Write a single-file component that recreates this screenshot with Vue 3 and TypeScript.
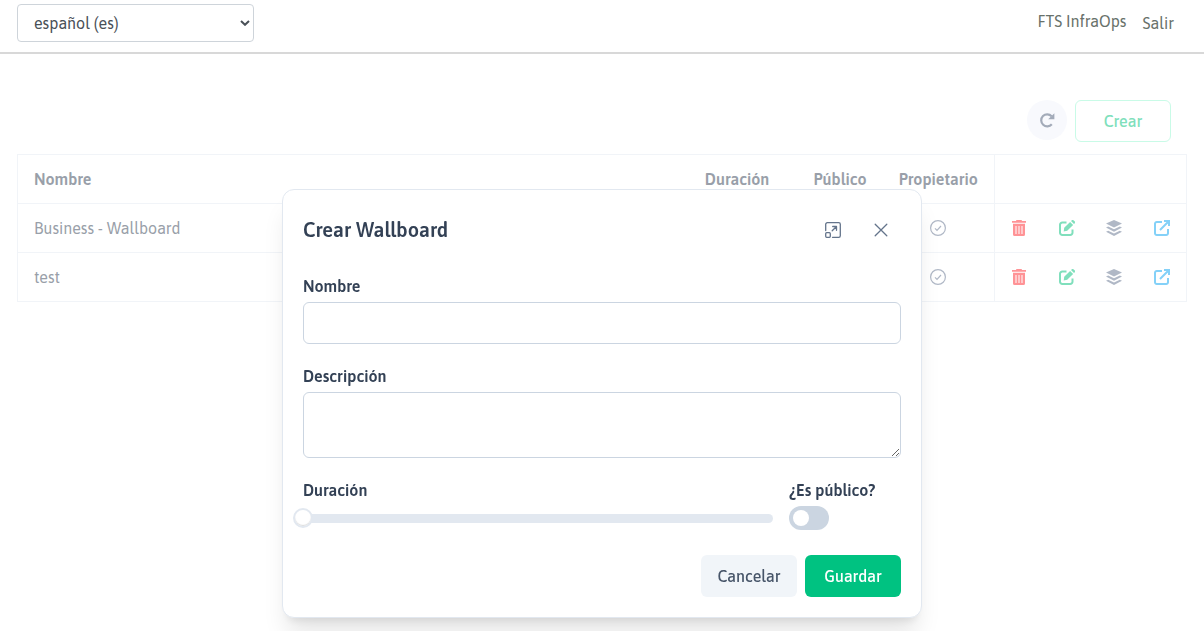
<script setup lang="ts">
import { ref } from 'vue'

interface Wallboard {
  id: number
  name: string
}

const language = ref('es')
const boards = ref<Wallboard[]>([
  { id: 1, name: 'Business - Wallboard' },
  { id: 2, name: 'test' },
])
const name = ref('')
const description = ref('')
const duration = ref(0)
const isPublic = ref(false)
</script>

<template>
  <div class="page">
    <header class="topbar">
      <div class="language">
        <select v-model="language" aria-label="Idioma">
          <option value="es">español (es)</option>
        </select>
        <svg class="chevron" viewBox="0 0 10 6" aria-hidden="true">
          <path d="M1 1 5 4.800 9 1" />
        </svg>
      </div>
      <nav class="account">
        <span class="user">FTS InfraOps</span>
        <a href="#">Salir</a>
      </nav>
    </header>

    <main class="content">
      <div class="toolbar">
        <button class="refresh" type="button" aria-label="Actualizar">
          <svg viewBox="0 0 16 16" aria-hidden="true">
            <path d="M12.800 12.200A6 6 0 1 1 12.600 4.200" fill="none" stroke="currentColor" stroke-width="2.200" />
            <path d="M15.400 1.200v6H9.200Z" fill="currentColor" />
          </svg>
        </button>
        <button class="create" type="button">Crear</button>
      </div>

      <table class="boards">
        <colgroup>
          <col />
          <col class="col-duration" />
          <col class="col-public" />
          <col class="col-owner" />
          <col class="col-actions" />
        </colgroup>
        <thead>
          <tr>
            <th class="name">Nombre</th>
            <th>Duración</th>
            <th>Público</th>
            <th>Propietario</th>
            <th class="actions"></th>
          </tr>
        </thead>
        <tbody>
          <tr v-for="board in boards" :key="board.id">
            <td class="name">{{ board.name }}</td>
            <td></td>
            <td></td>
            <td>
              <svg class="icon check" viewBox="0 0 16 16" aria-hidden="true">
                <circle cx="8" cy="8" r="7.400" />
                <path d="m5 8.300 2 2 4-4.300" />
              </svg>
            </td>
            <td class="actions">
              <div class="action-row">
                <button class="delete" type="button" aria-label="Eliminar">
                  <svg class="icon" viewBox="0 0 16 16" aria-hidden="true">
                    <path fill="currentColor" fill-rule="evenodd" d="M5.500 0h5l.6 1H15v1.800H1V1h3.900ZM2 3.800h12v10.700a1.500 1.500 0 0 1-1.500 1.500h-9A1.500 1.500 0 0 1 2 14.500ZM4.500 6v8h1V6Zm3 0v8h1V6Zm3 0v8h1V6Z" />
                  </svg>
                </button>
                <button class="edit" type="button" aria-label="Editar">
                  <svg class="icon" viewBox="0 0 16 16" aria-hidden="true">
                    <path d="M7.500 2.500H3.300A2.300 2.300 0 0 0 1 4.800v7.900A2.300 2.300 0 0 0 3.300 15h7.900a2.300 2.300 0 0 0 2.300-2.300V9.500" fill="none" stroke="currentColor" stroke-width="2" />
                    <path d="m5.200 7.800 5.900-5.900 3 3L8.200 10.800 4.700 11.500ZM12 1l.6-.6a1.500 1.500 0 0 1 2.100 0l.9.9a1.500 1.500 0 0 1 0 2.100l-.6.6Z" fill="currentColor" />
                  </svg>
                </button>
                <button class="layers" type="button" aria-label="Widgets">
                  <svg class="icon" viewBox="0 0 16 16" aria-hidden="true">
                    <path fill="currentColor" d="M8 0 16 3.600 8 7.400 0 3.600ZM0 7.600l2.200-1 5.800 2.700 5.800-2.700 2.200 1-8 4.100ZM0 11.800l2.200-1 5.800 2.800 5.800-2.800 2.200 1L8 16Z" />
                  </svg>
                </button>
                <button class="open" type="button" aria-label="Abrir">
                  <svg class="icon" viewBox="0 0 16 16" aria-hidden="true">
                    <path d="M8 2H2.800A1.800 1.800 0 0 0 1 3.800v9.400A1.800 1.800 0 0 0 2.800 15h9.400a1.800 1.800 0 0 0 1.800-1.800V9M6 10l8.500-8.500M10 1h5v5" fill="none" stroke="currentColor" stroke-width="2" />
                  </svg>
                </button>
              </div>
            </td>
          </tr>
        </tbody>
      </table>
    </main>

    <div class="overlay">
      <form class="dialog" role="dialog" aria-labelledby="dialog-title" @submit.prevent>
        <div class="dialog-header">
          <h2 id="dialog-title">Crear Wallboard</h2>
          <div class="window-actions">
            <button type="button" aria-label="Maximizar">
              <svg class="icon" viewBox="0 0 16 16" aria-hidden="true">
                <path d="M.7 8.500V2.300A1.600 1.600 0 0 1 2.300.7h11.400a1.600 1.600 0 0 1 1.600 1.600v11.400a1.600 1.600 0 0 1-1.600 1.600H7.500M7.200 8.800l4.300-4.300M7.700 4.500h3.800v3.800" />
                <rect x=".7" y="10.700" width="4.600" height="4.600" rx="1" />
              </svg>
            </button>
            <button type="button" aria-label="Cerrar">
              <svg class="icon" viewBox="0 0 16 16" aria-hidden="true">
                <path d="m2.200 2.200 11.600 11.600M13.800 2.200 2.200 13.800" />
              </svg>
            </button>
          </div>
        </div>
        <div class="dialog-body">
          <div class="field">
            <label for="board-name">Nombre</label>
            <input id="board-name" v-model="name" class="text" type="text" />
          </div>
          <div class="field">
            <label for="board-description">Descripción</label>
            <textarea id="board-description" v-model="description" class="text"></textarea>
          </div>
          <div class="options">
            <div class="field">
              <label for="board-duration">Duración</label>
              <input id="board-duration" v-model.number="duration" class="slider" type="range" min="0" max="100" />
            </div>
            <div class="field">
              <label for="board-public">¿Es público?</label>
              <input id="board-public" v-model="isPublic" class="switch" type="checkbox" />
            </div>
          </div>
          <div class="buttons">
            <button class="cancel" type="button">Cancelar</button>
            <button class="save" type="submit">Guardar</button>
          </div>
        </div>
      </form>
    </div>
  </div>
</template>

<style>
body {
  margin: 0;
  background: #fff;
}
</style>

<style scoped>
.page,
.page * {
  box-sizing: border-box;
}

.page {
  min-height: 100vh;
  font-family: Asap, "Noto Sans", sans-serif;
  font-size: 16px;
  line-height: 24px;
  color: #334155;
}

button,
input,
select,
textarea {
  font: inherit;
  margin: 0;
}

button {
  padding: 0;
  border: 0;
  background: none;
}

.icon {
  display: block;
  width: 16px;
  height: 16px;
}

.topbar {
  display: flex;
  justify-content: space-between;
  height: 54px;
  padding: 4px 30px 0 17px;
  border-bottom: 2px solid #d8d8d8;
}

.language {
  position: relative;
  width: 237px;
  height: 38px;
}

.language select {
  width: 100%;
  height: 100%;
  padding: 0 16px;
  appearance: none;
  border: 1px solid #ced4da;
  border-radius: 4px;
  background: #fff;
  color: #495057;
}

.chevron {
  position: absolute;
  right: 4px;
  top: 16px;
  width: 10px;
  height: 6px;
  fill: none;
  stroke: #495057;
  stroke-width: 2;
  pointer-events: none;
}

.account {
  display: flex;
  align-items: flex-start;
  gap: 16px;
  padding-top: 5px;
  color: #68716a;
}

.account a {
  padding-top: 2px;
  color: inherit;
  text-decoration: none;
}

.content {
  padding: 46px 17px 0;
}

.toolbar {
  display: flex;
  justify-content: flex-end;
  gap: 8px;
  padding: 0 16px 12px 0;
}

.refresh {
  display: grid;
  place-items: center;
  width: 40px;
  height: 40px;
  border-radius: 50%;
  background: #f8f9fd;
  color: #a3abb9;
}

.refresh svg {
  width: 16px;
  height: 16px;
}

.create {
  width: 96px;
  height: 42px;
  border: 1px solid #c9fbe7;
  border-radius: 6px;
  color: #80dfbc;
  font-weight: 500;
}

.boards {
  width: 100%;
  table-layout: fixed;
  border-collapse: collapse;
  border: 1px solid #f1f4f8;
  color: #999fa9;
}

.col-duration { width: 121px; }
.col-public { width: 85px; }
.col-owner { width: 112px; }
.col-actions { width: 192px; }

.boards th,
.boards td {
  height: 49px;
  padding: 0;
  border-bottom: 1px solid #f1f4f8;
  text-align: center;
}

.boards th {
  font-weight: 600;
}

.boards .name {
  padding-left: 16px;
  text-align: left;
}

.boards .actions {
  border-left: 1px solid #f1f4f8;
}

.check {
  margin: 0 auto;
  fill: none;
  stroke: #b0b8c6;
  stroke-width: 1.200;
}

.action-row {
  display: flex;
}

.action-row button {
  display: grid;
  place-items: center;
  flex: 1;
  height: 40px;
}

.delete { color: #ff9396; }
.edit { color: #80dfbc; }
.layers { color: #b0b8c6; }
.open { color: #84d1f8; }

.overlay {
  position: fixed;
  inset: 0;
  display: flex;
  justify-content: center;
  align-items: flex-end;
  padding-bottom: 13px;
}

.dialog {
  width: 640px;
  max-width: 90%;
  border: 1px solid #e2e8f0;
  border-radius: 12px;
  background: #fff;
  box-shadow: 0 20px 25px -5px rgba(0, 0, 0, 0.1), 0 8px 10px -6px rgba(0, 0, 0, 0.1);
}

.dialog-header {
  display: flex;
  justify-content: space-between;
  align-items: center;
  padding: 20px;
}

.dialog-header h2 {
  margin: 0;
  font-size: 20px;
  font-weight: 600;
}

.window-actions {
  display: flex;
  gap: 8px;
}

.window-actions button {
  display: grid;
  place-items: center;
  width: 40px;
  height: 40px;
}

.window-actions .icon {
  fill: none;
  stroke: #64748b;
  stroke-width: 1.300;
  stroke-linecap: round;
  stroke-linejoin: round;
}

.dialog-body {
  display: flex;
  flex-direction: column;
  gap: 20px;
  padding: 4px 20px 20px;
}

.field {
  display: flex;
  flex-direction: column;
  gap: 4px;
}

.field label {
  font-weight: 600;
}

.text {
  width: 100%;
  height: 42px;
  padding: 8px 12px;
  border: 1px solid #cbd5e1;
  border-radius: 6px;
  background: #fff;
  color: #334155;
}

textarea.text {
  display: block;
  height: 66px;
  resize: vertical;
}

.options {
  display: grid;
  grid-template-columns: 1fr 112px;
  gap: 16px;
}

.slider {
  width: calc(100% + 10px);
  height: 24px;
  margin-left: -10px;
  appearance: none;
  background: none;
}

.slider::-webkit-slider-runnable-track {
  height: 9px;
  border-radius: 6px;
  background: linear-gradient(to right, transparent 10px, #e2e8f0 10px);
}

.slider::-webkit-slider-thumb {
  width: 20px;
  height: 20px;
  margin-top: -6px;
  appearance: none;
  border: 2px solid #e2e8f0;
  border-radius: 50%;
  background: #fff;
  box-shadow: inset 0 -1px 1px rgba(0, 0, 0, 0.14);
}

.switch {
  display: flex;
  align-items: center;
  width: 40px;
  height: 24px;
  padding: 0 4px;
  appearance: none;
  border-radius: 12px;
  background: #cbd5e1;
}

.switch::before {
  content: "";
  width: 16px;
  height: 16px;
  border-radius: 50%;
  background: #fff;
}

.switch:checked {
  justify-content: flex-end;
  background: #00c281;
}

.buttons {
  display: flex;
  justify-content: flex-end;
  gap: 8px;
  padding-top: 5px;
}

.buttons button {
  width: 96px;
  height: 42px;
  border-radius: 6px;
  font-weight: 500;
}

.cancel {
  background: #f1f5f9;
  color: #475569;
}

.save {
  background: #00c281;
  color: #fff;
}
</style>
